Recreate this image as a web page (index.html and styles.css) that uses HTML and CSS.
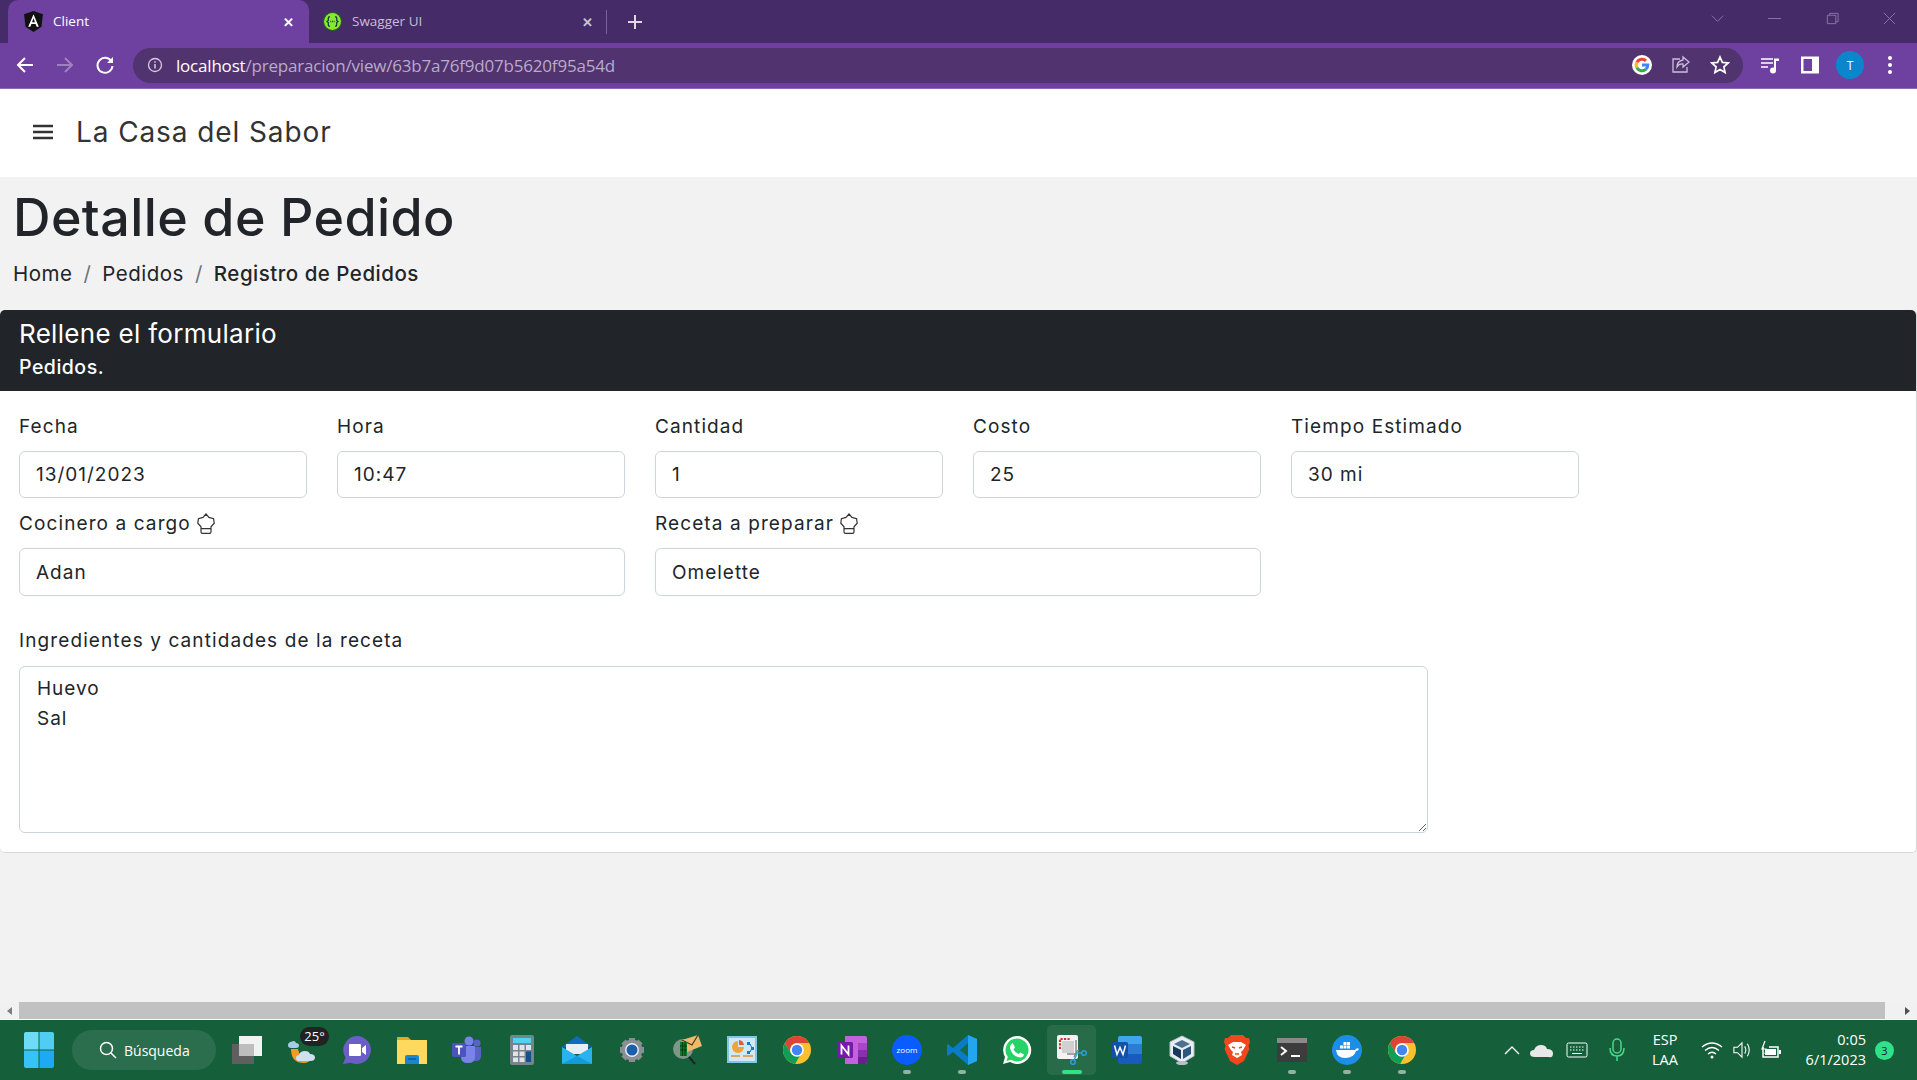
FILE: index.html
```html
<!DOCTYPE html>
<html lang="es">
<head>
    <meta charset="UTF-8">
    <meta name="viewport" content="width=device-width, initial-scale=1.0">
    <title>Client</title>
    <link rel="stylesheet" href="styles.css">
</head>
<body>
    <svg class="defs" width="0" height="0">
        <symbol id="chrome" viewBox="0 0 30 30">
            <circle cx="15" cy="15" r="14" fill="#fbc02d"/>
            <path d="M15 1a14 14 0 0 1 12.100 7H15a7 7 0 0 0-6.600 9.300L2.900 8A14 14 0 0 1 15 1z" fill="#db4437"/>
            <path d="M2.900 8a14 14 0 0 0 10.200 20.900l5.900-10.200a7 7 0 0 1-10.600-1.400z" fill="#0f9d58"/>
            <circle cx="15" cy="15" r="6.800" fill="#fff"/>
            <circle cx="15" cy="15" r="5.200" fill="#4285f4"/>
        </symbol>
        <symbol id="hat" viewBox="0 0 18 22">
            <path d="M9 1l3 3.400 4.600 1.400.6 4.400-3.200 3.600v5.200q0 1.400-1.400 1.400H5.400q-1.400 0-1.400-1.400v-5.200L.8 10.200l.6-4.400L6 4.400z M4 15.600h10" fill="none" stroke="#333" stroke-width="1.200"/>
        </symbol>
    </svg>

    <!-- barra del navegador -->
    <div class="tabstrip">
        <div class="tab tab-active">
            <svg class="favicon" viewBox="0 0 18 20"><path d="M9 0l9 3.200-1.400 11.900L9 20l-7.600-4.900L0 3.200z" fill="#111"/><path d="M9 3L4 15h2l1-2.600h4l1 2.600h2zM9 7l1.400 3.600H7.600z" fill="#fff"/></svg>
            <span class="tab-title">Client</span>
            <span class="tab-close">✕</span>
        </div>
        <div class="tab">
            <svg class="favicon" viewBox="0 0 18 18"><circle cx="9" cy="9" r="8.500" fill="#85ea2d" stroke="#2d5c1a"/><path d="M6.500 4.500q-1.500 0-1.500 1.500v2L3.800 9 5 10v2q0 1.500 1.500 1.500M11.500 4.500q1.500 0 1.500 1.500v2L14.200 9 13 10v2q0 1.500-1.500 1.500" fill="none" stroke="#173647" stroke-width="1.200"/><path d="M7 9h.8M8.600 9h.8M10.200 9h.8" stroke="#173647" stroke-width="1.200"/></svg>
            <span class="tab-title tab-title-dim">Swagger UI</span>
            <span class="tab-close tab-close-dim">✕</span>
        </div>
        <span class="tab-sep"></span>
        <svg class="new-tab" viewBox="0 0 16 16"><path d="M8 1v14M1 8h14" stroke="#e0d8ea" stroke-width="2"/></svg>
        <div class="window-btns">
            <svg viewBox="0 0 16 16"><path d="M2 5l6 6 6-6" fill="none" stroke="#8c78a8"/></svg>
            <svg viewBox="0 0 16 16"><path d="M1 8h14" stroke="#8c78a8"/></svg>
            <svg viewBox="0 0 16 16"><path d="M2.500 4.500h9v9h-9zM5 4.500V2.500h9v9h-2.500" fill="none" stroke="#8c78a8"/></svg>
            <svg viewBox="0 0 16 16"><path d="M2 2l12 12M14 2L2 14" stroke="#8c78a8"/></svg>
        </div>
    </div>

    <div class="toolbar">
        <div class="nav-btns">
            <svg viewBox="0 0 20 20"><path d="M18 10H3M10 3l-7 7 7 7" fill="none" stroke="#fff" stroke-width="2"/></svg>
            <svg viewBox="0 0 20 20"><path d="M2 10h15M10 3l7 7-7 7" fill="none" stroke="#9d82bd" stroke-width="2"/></svg>
            <svg viewBox="0 0 20 20"><path d="M16.500 6.500A7.500 7.500 0 1 0 17.500 11" fill="none" stroke="#fff" stroke-width="2"/><path d="M18 2v6h-6z" fill="#fff"/></svg>
        </div>
        <div class="omnibox">
            <svg class="info" viewBox="0 0 16 16"><circle cx="8" cy="8" r="6.500" fill="none" stroke="#d6cce2" stroke-width="1.300"/><path d="M8 7v4.500M8 4.300v1.500" stroke="#d6cce2" stroke-width="1.500"/></svg>
            <span class="url"><b>localhost</b>/preparacion/view/63b7a76f9d07b5620f95a54d</span>
            <svg class="omni-icon" viewBox="0 0 20 20"><circle cx="10" cy="10" r="10" fill="#fff"/><g fill="none" stroke-width="3"><path d="M4.900 7.200A5.800 5.800 0 0 1 14 5.800" stroke="#ea4335"/><path d="M4.900 7.200a5.800 5.800 0 0 0 0 5.600" stroke="#fbbc05"/><path d="M4.900 12.800A5.800 5.800 0 0 0 14 14.200" stroke="#34a853"/><path d="M14 14.200A5.800 5.800 0 0 0 15.800 10H10" stroke="#4285f4"/></g></svg>
            <svg class="omni-icon" viewBox="0 0 20 20"><path d="M9 4H2v13h14v-5" fill="none" stroke="#cbbedb" stroke-width="1.300"/><path d="M12 2l6 5-6 5V9q-4-.5-6 3 0-6 6-7z" fill="none" stroke="#cbbedb" stroke-width="1.300"/></svg>
            <svg class="omni-icon" viewBox="0 0 20 20"><path d="M10 2l2.400 5.400 5.800.6-4.300 3.900 1.200 5.700-5.100-3-5.100 3 1.200-5.700L1.800 8l5.800-.6z" fill="none" stroke="#fff" stroke-width="1.700"/></svg>
        </div>
        <div class="tool-icons">
            <svg viewBox="0 0 20 20"><path d="M1 4h12M1 8h12M1 12h7" stroke="#fff" stroke-width="1.600"/><path d="M14 14.500V3.500h5v2.500h-3v9" fill="#fff"/><circle cx="13" cy="15.500" r="3" fill="#fff"/></svg>
            <svg viewBox="0 0 20 20"><path d="M1 1.500h18v17H1z" fill="#fff"/><path d="M3.500 4h8.500v12H3.500z" fill="#6e409f"/></svg>
            <span class="avatar">T</span>
            <svg viewBox="0 0 20 20"><circle cx="10" cy="3" r="2" fill="#fff"/><circle cx="10" cy="10" r="2" fill="#fff"/><circle cx="10" cy="17" r="2" fill="#fff"/></svg>
        </div>
    </div>

    <!-- pagina -->
    <main class="page">
        <header class="navbar">
            <svg class="burger" viewBox="0 0 20 16"><path d="M0 2h20M0 8h20M0 14h20" stroke="#333" stroke-width="2.400"/></svg>
            <span class="brand">La Casa del Sabor</span>
        </header>
        <section class="page-title">
            <h1>Detalle de Pedido</h1>
            <ul class="breadcrumb">
                <li>Home</li>
                <li class="slash">/</li>
                <li>Pedidos</li>
                <li class="slash">/</li>
                <li class="current">Registro de Pedidos</li>
            </ul>
        </section>
        <section class="card">
            <div class="card-header">
                <h2>Rellene el formulario</h2>
                <p>Pedidos.</p>
            </div>
            <form class="card-body">
                <div class="form-row">
                    <div class="field">
                        <label>Fecha</label>
                        <input type="text" value="13/01/2023" readonly>
                    </div>
                    <div class="field">
                        <label>Hora</label>
                        <input type="text" value="10:47" readonly>
                    </div>
                    <div class="field">
                        <label>Cantidad</label>
                        <input type="text" value="1" readonly>
                    </div>
                    <div class="field">
                        <label>Costo</label>
                        <input type="text" value="25" readonly>
                    </div>
                    <div class="field">
                        <label>Tiempo Estimado</label>
                        <input type="text" value="30 mi" readonly>
                    </div>
                </div>
                <div class="form-row form-row-2">
                    <div class="field field-wide">
                        <label>Cocinero a cargo <svg class="hat"><use href="#hat"/></svg></label>
                        <input type="text" value="Adan" readonly>
                    </div>
                    <div class="field field-wide">
                        <label>Receta a preparar <svg class="hat"><use href="#hat"/></svg></label>
                        <input type="text" value="Omelette" readonly>
                    </div>
                </div>
                <div class="field field-area">
                    <label>Ingredientes y cantidades de la receta</label>
                    <textarea readonly>Huevo
Sal</textarea>
                </div>
            </form>
        </section>
    </main>

    <div class="hscroll">
        <span class="hscroll-btn"><i class="arrow-left"></i></span>
        <span class="hscroll-thumb"></span>
        <span class="hscroll-btn"><i class="arrow-right"></i></span>
    </div>

    <!-- barra de tareas -->
    <footer class="taskbar">
        <svg class="start" viewBox="0 0 30 36"><path d="M0 2q0-2 2-2h12.500v17.500H0z" fill="#6fdcf5"/><path d="M15.500 0H28q2 0 2 2v15.500H15.500z" fill="#4fcdf3"/><path d="M0 18.500h14.500V36H2q-2 0-2-2z" fill="#38c3f8"/><path d="M15.500 18.500H30V34q0 2-2 2H15.500z" fill="#1ea9f5"/></svg>
        <div class="search">
            <svg viewBox="0 0 18 18"><circle cx="7.500" cy="7.500" r="6" fill="none" stroke="#fff" stroke-width="1.500"/><path d="M12 12l5 5" stroke="#fff" stroke-width="1.500"/></svg>
            <span>Búsqueda</span>
        </div>
        <div class="apps">
            <div class="app"><svg viewBox="0 0 30 30"><rect x="0" y="9" width="22" height="20" fill="#5f5f5f"/><rect x="7" y="1" width="23" height="20" fill="#f2f2f2"/><rect x="7" y="9" width="15" height="12" fill="#bdbdbd"/></svg></div>
            <div class="app">
                <svg viewBox="0 0 30 30"><path d="M4 14q0 14 13 14 5 0 7-4-11 1-13-10z" fill="#f09a2c"/><path d="M9 13q3 0 3-2.500T9 8Q8 5 5 6.500 1 7 1 10t3 3z" fill="#a8cbe8"/><path d="M12 26q-3 0-3-3t3-3q1-4 6-4 4 0 5 3 5 0 5 3.500T23 26z" fill="#cfe0ef"/></svg>
                <span class="temp">25°</span>
            </div>
            <div class="app"><svg viewBox="0 0 30 30"><path d="M15 1a14 14 0 1 1-6 26.700L1 29l2.500-6.500A14 14 0 0 1 15 1z" fill="#6b5fc7"/><path d="M8 9h10q1 0 1 1v10q0 1-1 1H8q-1 0-1-1V10q0-1 1-1zM20 13l4-3v10l-4-3z" fill="#fff"/></svg></div>
            <div class="app"><svg viewBox="0 0 30 30"><path d="M0 5h30v24H0z" fill="#ffd95e"/><path d="M0 2h11l3 3H0z" fill="#e3a820"/><path d="M8 29v-7q0-2 2-2h10q2 0 2 2v7z" fill="#1a86d0"/><path d="M11 24h8" stroke="#0b5a9a" stroke-width="1.500"/></svg></div>
            <div class="app"><svg viewBox="0 0 30 30"><circle cx="25" cy="8" r="3.500" fill="#5a62c4"/><circle cx="17" cy="6" r="4.500" fill="#7b83eb"/><path d="M20 12h9v9q0 5-5 5t-4-5z" fill="#5a62c4"/><path d="M9 11h14v11q0 6-7 6t-7-6z" fill="#7b83eb"/><rect x="0" y="8" width="14" height="14" rx="1.500" fill="#4b53bc"/><path d="M3.500 11.500h7M7 11.500v8" stroke="#fff" stroke-width="1.800"/></svg></div>
            <div class="app"><svg viewBox="0 0 24 30"><rect x="0" y="0" width="24" height="30" rx="2" fill="#77848e"/><rect x="3" y="3" width="18" height="5" fill="#4fd3ee"/><path d="M3 10h5v5H3zM9.500 10h5v5h-5zM16 10h5v5h-5zM3 16.500h5v4.500H3zM9.500 16.500h5v4.500h-5zM3 22.500h5V27H3zM9.500 22.500h5V27h-5z" fill="#dfe4e8"/><rect x="16" y="16.500" width="5" height="10.500" fill="#14508f"/></svg></div>
            <div class="app"><svg viewBox="0 0 30 30"><path d="M15 1L0 12h30z" fill="#0f6cbd"/><path d="M4 9h22v10H4z" fill="#e8eef5"/><path d="M0 12v17h30V12L15 21z" fill="#29b2ee"/><path d="M0 29l15-8 15 8z" fill="#139ad8"/></svg></div>
            <div class="app"><svg viewBox="0 0 30 30"><path d="M15 3v24M3 15h24M6.500 6.500l17 17M23.500 6.500l-17 17" stroke="#8a8f94" stroke-width="6"/><circle cx="15" cy="15" r="10.500" fill="#8a8f94"/><circle cx="15" cy="15" r="7" fill="#e8eef5"/><circle cx="15" cy="15" r="5.500" fill="#1c5ea8"/></svg></div>
            <div class="app"><svg viewBox="0 0 30 30"><circle cx="11" cy="14" r="10" fill="#7f968a"/><path d="M17 22l6 7" stroke="#222" stroke-width="2"/><path d="M10 5l16-5 4 11-15 6z" fill="#eeb96a"/><path d="M10 5l10 5 6-10" fill="none" stroke="#4b3a1e" stroke-width="1.200"/><path d="M8 7h7v14H8z" fill="#0f7a2c"/><path d="M8 11h7M8 15h7M10.500 7v14M13 7v14" stroke="#0b2f14" stroke-width=".8"/></svg></div>
            <div class="app"><svg viewBox="0 0 30 30"><rect x="0" y="1" width="30" height="27" fill="#7fc6e8"/><rect x="2" y="3" width="26" height="23" fill="#cfeaf6"/><path d="M11 6a6 6 0 1 0 6 6h-6z" fill="#f0a43c"/><path d="M12 5a6 6 0 0 1 5 5h-5z" fill="#e2622a"/><path d="M20 7h3v3h-3zM24 12h3v3h-3zM20 16h3v3h-3z" fill="#1b79bd"/><path d="M4 21h9M16 21h10" stroke="#e88f2f" stroke-width="1.500"/><path d="M23 9l2 4-2 4" fill="none" stroke="#1b79bd"/></svg></div>
            <div class="app"><svg><use href="#chrome"/></svg></div>
            <div class="app"><svg viewBox="0 0 30 30"><path d="M8 1h20q2 0 2 2v24q0 2-2 2H8z" fill="#c263dd"/><path d="M21 8h9v7h-9z" fill="#a945c7"/><path d="M21 15h9v7h-9z" fill="#8a2fb0"/><path d="M21 22h9v5q0 2-2 2h-7z" fill="#6a1f90"/><rect x="0" y="7" width="16" height="16" rx="1.500" fill="#7719aa"/><path d="M4.500 19.500v-9l7 9v-9" fill="none" stroke="#fff" stroke-width="1.800"/></svg></div>
            <div class="app">
                <svg viewBox="0 0 30 30"><circle cx="15" cy="15" r="15" fill="#0b5cff"/><text class="zoom-text" x="15" y="18">zoom</text></svg>
                <i class="dot"></i>
            </div>
            <div class="app">
                <svg viewBox="0 0 30 30"><path d="M21 0l9 4v22l-9 4L6 17l-5 4-1-1v-10l1-1 5 4z" fill="#0a7cc7"/><path d="M21 0l9 4v22l-9 4z" fill="#23a5ef"/><path d="M21 8l-8 7 8 7z" fill="#136a44"/></svg>
                <i class="dot"></i>
            </div>
            <div class="app"><svg viewBox="0 0 30 30"><path d="M15 1a14 14 0 1 1-7 26L1 29l2-7A14 14 0 0 1 15 1z" fill="#fff"/><path d="M15 3.500a11.500 11.500 0 1 1-6 21.300l-4.500 1.300 1.300-4.300A11.500 11.500 0 0 1 15 3.500z" fill="#25d366"/><path d="M11 8.500l2 4-1.500 2q2 3.500 5 4.500l2-1.500 3.500 2q-.5 3-4 3-8-1-10-9.500 0-4 3-5z" fill="#fff"/></svg></div>
            <div class="app app-active">
                <svg viewBox="0 0 30 30"><rect x="0" y="0" width="21" height="24" rx="2" fill="#f3f3f3"/><path d="M3 14V4h11" fill="none" stroke="#c8392b" stroke-width="2.200" stroke-dasharray="2.200 1.300"/><path d="M5 6h12v12H5z" fill="#d0d0d0"/><path d="M19 5v14l-9 0" fill="none" stroke="#8b8b8b" stroke-width="1.500"/><path d="M17 22l3-6 2-1" fill="none" stroke="#888" stroke-width="1.500"/><circle cx="16" cy="27" r="2.300" fill="none" stroke="#2a9fd6" stroke-width="1.600"/><circle cx="27" cy="18" r="2.300" fill="none" stroke="#2a9fd6" stroke-width="1.600"/><path d="M17 25l3-6M25 18h-6" stroke="#2a9fd6" stroke-width="1.400"/></svg>
                <i class="dot dot-active"></i>
            </div>
            <div class="app"><svg viewBox="0 0 30 30"><path d="M8 1h20q2 0 2 2v6H6V3q0-2 2-2z" fill="#41a5ee"/><path d="M6 9h24v10H6z" fill="#2b7cd3"/><path d="M6 19h24v7q0 3-2 3H8q-2 0-2-3z" fill="#185abd"/><rect x="0" y="7" width="16" height="16" rx="1.500" fill="#1450a8"/><path d="M2.500 10.500l2.500 9 3-7 3 7 2.500-9" fill="none" stroke="#fff" stroke-width="1.500"/></svg></div>
            <div class="app"><svg viewBox="0 0 26 30"><path d="M13 1l12 6v14l-12 7-12-7V7z" fill="#e8eef2" stroke="#b8c0c8"/><path d="M13 5l8 4-8 4-8-4z" fill="#4c6f92"/><path d="M4 11l8 4v9l-8-5z" fill="#173a5c"/><path d="M22 11l-8 4v9l8-5z" fill="#2a5680"/><ellipse cx="13" cy="28" rx="6" ry="2" fill="#b8c0c8"/></svg></div>
            <div class="app"><svg viewBox="0 0 26 30"><path d="M7 0h12l3 3 3 0 1 4-1.500 4 1 3L20 26l-7 4-7-4L.5 14l1-3L0 7l1-4 3 0z" fill="#f1471d"/><path d="M4 10l5-3h8l5 3-3 5-2 2 1 3-5 3-5-3 1-3-2-2z" fill="#fff"/><path d="M8 12l3 1M18 12l-3 1M11 19h4" stroke="#f1471d" stroke-width="1.500"/></svg></div>
            <div class="app">
                <svg viewBox="0 0 30 24"><rect x="0" y="0" width="30" height="24" rx="2" fill="#3c3c3c"/><rect x="0" y="0" width="30" height="5" fill="#8a8a8a"/><path d="M4 9l5 4-5 4" fill="none" stroke="#fff" stroke-width="2"/><path d="M14 18h9" stroke="#fff" stroke-width="2"/></svg>
                <i class="dot"></i>
            </div>
            <div class="app">
                <svg viewBox="0 0 30 30"><circle cx="15" cy="15" r="15" fill="#1d8ee8"/><path d="M4 15h19q2-3 4-1-1 2-3 2-2 7-11 7-8 0-9-8z" fill="#fff"/><path d="M8 10.500h3v3H8zM11.500 10.500h3v3h-3zM15 10.500h3v3h-3zM11.500 7h3v3h-3zM15 7h3v3h-3z" fill="#fff"/></svg>
                <i class="dot"></i>
            </div>
            <div class="app">
                <svg><use href="#chrome"/></svg>
                <i class="dot"></i>
            </div>
        </div>
        <div class="tray">
            <svg class="tray-slot" viewBox="0 0 30 16"><path d="M8 12l7-7 7 7" fill="none" stroke="#fff" stroke-width="1.300"/></svg>
            <svg class="tray-slot" viewBox="0 0 30 16"><path d="M8 15q-5 0-5-3.500T7 8q2-5 7-5t6 4q6 0 6 4.500T22 15z" fill="#e8e8e8"/></svg>
            <svg class="tray-kb" viewBox="0 0 40 16"><rect x="10" y="1" width="20" height="14" rx="1.500" fill="none" stroke="#fff"/><path d="M13 5h1.500M16 5h1.500M19 5h1.500M22 5h1.500M25 5h1.500M13 8h1.500M16 8h1.500M19 8h1.500M22 8h1.500M25 8h1.500M15 11.500h10" stroke="#fff"/></svg>
            <svg class="tray-kb" viewBox="0 0 40 24"><rect x="16" y="1" width="8" height="14" rx="4" fill="none" stroke="#46d98c" stroke-width="1.500"/><path d="M13 10q0 8 7 8t7-8M20 18v5" fill="none" stroke="#46d98c" stroke-width="1.500"/></svg>
            <div class="lang">ESP<br>LAA</div>
            <svg class="tray-wifi" viewBox="0 0 22 18"><path d="M1 6q10-8 20 0M4 9.500q7-6 14 0M7 13q4-3.500 8 0" fill="none" stroke="#fff" stroke-width="1.300"/><circle cx="11" cy="16" r="1.500" fill="#fff"/></svg>
            <svg class="tray-slot" viewBox="0 0 30 20"><path d="M6 7h4l5-5v16l-5-5H6z" fill="none" stroke="#fff" stroke-width="1.200"/><path d="M18 6q2.500 4 0 8M21 3q4 7 0 14" fill="none" stroke="#fff" stroke-width="1.200"/></svg>
            <svg class="tray-batt" viewBox="-2 0 32 20"><path d="M4 7v10h15V7H10" fill="none" stroke="#fff" stroke-width="1.500"/><path d="M6 9h11v6H6z" fill="#fff"/><path d="M20 10h2v4h-2z" fill="#fff"/><path d="M6 1L3 9h4l-1 5" fill="none" stroke="#fff" stroke-width="1.200"/></svg>
            <div class="clock">0:05<br>6/1/2023</div>
            <span class="badge">3</span>
        </div>
    </footer>
</body>
</html>
```

FILE: styles.css
```css
* {
    box-sizing: border-box;
}

html, body {
    height: 100%;
}

body {
    margin: 0;
    display: flex;
    flex-direction: column;
    height: 100vh;
    overflow: hidden;
    font-family: "Open Sans", sans-serif;
    background-color: #f2f2f2;
    color: #212529;
}

.defs {
    position: absolute;
}

/* navegador */
.tabstrip {
    height: 43px;
    flex: none;
    display: flex;
    align-items: center;
    background-color: #452b68;
    color: #fff;
}

.tab {
    width: 300px;
    height: 43px;
    display: flex;
    align-items: center;
    padding: 0 14px 0 16px;
    font-size: 13.5px;
}

.tab-active {
    margin-left: 8px;
    width: 301px;
    padding-right: 15px;
    background-color: #6e409f;
    border-radius: 10px 10px 0 0;
}

.tab:not(.tab-active) {
    width: 297px;
    padding: 0 13px 0 14px;
}

.favicon {
    width: 19px;
    height: 21px;
    flex: none;
}

.tab-title {
    margin-left: 10px;
    padding-bottom: 2px;
    flex: 1;
}

.tab-title-dim {
    color: #c9bdd9;
}

.tab-close {
    font-size: 13px;
    font-weight: bold;
}

.tab-close-dim {
    color: #cbc2d8;
}

.tab-sep {
    width: 1px;
    height: 24px;
    background-color: #7a6496;
}

.new-tab {
    width: 16px;
    height: 16px;
    margin-left: 20px;
}

.window-btns {
    margin-left: auto;
    display: flex;
    align-items: center;
    gap: 42.5px;
    padding-right: 20px;
    margin-top: -6px;
}

.window-btns svg {
    width: 15px;
    height: 15px;
}

.toolbar {
    height: 46px;
    flex: none;
    display: flex;
    align-items: center;
    padding-bottom: 1px;
    background-color: #6e409f;
    border-bottom: 1px solid #8f69b8;
}

.nav-btns {
    display: flex;
    gap: 20px;
    padding-left: 15px;
    width: 133px;
}

.nav-btns svg {
    width: 20px;
    height: 20px;
}

.omnibox {
    width: 1610px;
    height: 35px;
    display: flex;
    align-items: center;
    padding: 0 13px 0 14px;
    background-color: #51336f;
    border-radius: 18px;
}

.info {
    width: 16px;
    height: 16px;
}

.url {
    margin-left: 13px;
    flex: 1;
    font-size: 17px;
    letter-spacing: -.2px;
    color: #b9abca;
    white-space: nowrap;
}

.url b {
    font-weight: normal;
    color: #fff;
}

.omni-icon {
    width: 20px;
    height: 20px;
    margin-right: 19px;
}

.omni-icon:last-child {
    margin-right: 0;
}

.tool-icons {
    flex: 1;
    display: flex;
    align-items: center;
    gap: 20px;
    padding-left: 17px;
}

.tool-icons svg {
    width: 20px;
    height: 20px;
}

.avatar {
    width: 28px;
    height: 28px;
    border-radius: 50%;
    background-color: #0b85cc;
    color: #fff;
    font-size: 12px;
    display: flex;
    align-items: center;
    justify-content: center;
    margin: 0 -4px;
}

/* pagina */
.page {
    flex: 1;
    min-height: 0;
    font-family: Inter, "Liberation Sans", sans-serif;
}

.navbar {
    height: 88px;
    display: flex;
    align-items: center;
    padding: 0 0 2px 33px;
    background-color: #fff;
}

.burger {
    width: 20px;
    height: 16px;
}

.brand {
    margin-left: 23px;
    font-size: 28px;
    letter-spacing: .9px;
    color: #333;
}

.page-title {
    height: 133px;
    padding: 9px 14px 0 13px;
}

h1 {
    margin: 0;
    font-size: 52px;
    font-weight: 500;
    line-height: 64px;
    letter-spacing: .4px;
    color: #212529;
}

.breadcrumb {
    list-style: none;
    margin: 10px 0 0;
    padding: 0;
    display: flex;
    gap: 11px;
    font-size: 20.5px;
    line-height: 28px;
    letter-spacing: .5px;
}

.slash {
    color: #6c757d;
}

.current {
    font-weight: 500;
}

.card {
    height: 543px;
    background-color: #fff;
    border-right: 1px solid #d8d8d8;
    border-bottom: 1px solid #d8d8d8;
    border-radius: 5px;
}

.card-header {
    height: 81px;
    padding: 9px 19px 0;
    background-color: #212529;
    color: #fff;
    border-radius: 5px 5px 0 0;
}

.card-header h2 {
    margin: 0;
    font-size: 26px;
    font-weight: 400;
    line-height: 30px;
    letter-spacing: .3px;
}

.card-header p {
    margin: 6px 0 0;
    font-size: 19.5px;
    font-weight: 500;
    line-height: 24px;
    letter-spacing: .5px;
}

.card-body {
    padding: 24px 19px 0;
}

.form-row {
    display: grid;
    grid-template-columns: repeat(6, 288px);
    column-gap: 30px;
}

.form-row-2 {
    margin-top: 14px;
}

.field-wide {
    grid-column: span 2;
}

label {
    display: block;
    font-size: 19px;
    line-height: 24px;
    height: 24px;
    letter-spacing: 1.1px;
    color: #212529;
}

.hat {
    width: 18px;
    height: 22px;
    vertical-align: -5px;
}

input, textarea {
    display: block;
    width: 100%;
    margin-top: 12px;
    border: 1px solid #ced4da;
    border-radius: 6px;
    background-color: #fff;
    color: #212529;
    font-family: inherit;
    font-size: 19px;
    letter-spacing: 1px;
    padding: 0 16px;
    outline: none;
}

input {
    height: 47px;
}

.field-wide input {
    height: 48px;
}

.field-area {
    margin-top: 33px;
}

textarea {
    width: 1409px;
    height: 167px;
    margin-top: 13px;
    padding: 7px 17px;
    line-height: 30px;
    resize: both;
}

/* scroll horizontal */
.hscroll {
    height: 18px;
    flex: none;
    display: flex;
    background-color: #f1f1f1;
    border-bottom: 1px solid #fff;
}

.hscroll-btn {
    width: 19px;
    display: flex;
    align-items: center;
    justify-content: center;
}

.hscroll-thumb {
    flex: 1;
    margin-right: 13px;
    background-color: #c1c1c1;
}

.arrow-left {
    border: 4px solid transparent;
    border-right: 5px solid #7d7d7d;
    border-left: 0;
}

.arrow-right {
    border: 4px solid transparent;
    border-left: 5px solid #505050;
    border-right: 0;
}

/* barra de tareas */
.taskbar {
    height: 60px;
    flex: none;
    display: flex;
    align-items: center;
    padding-left: 24px;
    background-color: #155f3a;
    color: #fff;
    font-family: "Open Sans", sans-serif;
}

.start {
    width: 30px;
    height: 36px;
    flex: none;
}

.search {
    width: 144px;
    height: 40px;
    margin-left: 18px;
    display: flex;
    align-items: center;
    padding-left: 27px;
    gap: 7px;
    border-radius: 20px;
    background-color: #2a6e4d;
    font-size: 14px;
}

.search svg {
    width: 18px;
    height: 18px;
}

.apps {
    display: flex;
    margin-left: 3px;
}

.app {
    position: relative;
    width: 55px;
    height: 60px;
    display: flex;
    align-items: center;
    justify-content: center;
}

.app svg {
    width: 30px;
    height: 30px;
}

.app-active::before {
    content: "";
    position: absolute;
    left: 3px;
    right: 3px;
    top: 5px;
    bottom: 5px;
    border-radius: 5px;
    background-color: rgba(255, 255, 255, .08);
}

.app-active svg {
    position: relative;
}

.temp {
    position: absolute;
    top: 7px;
    left: 26px;
    width: 29px;
    height: 19px;
    border-radius: 10px;
    background-color: #222;
    font-size: 13px;
    line-height: 19px;
    text-align: center;
}

.zoom-text {
    font-size: 8px;
    fill: #fff;
    text-anchor: middle;
}

.dot {
    position: absolute;
    left: 50%;
    bottom: 6px;
    width: 8px;
    height: 4px;
    margin-left: -4px;
    border-radius: 2px;
    background-color: #8fb3a3;
}

.dot-active {
    width: 20px;
    margin-left: -10px;
    background-color: #2fe28a;
}

.tray {
    margin-left: auto;
    display: flex;
    align-items: center;
    padding-right: 23px;
}

.tray-slot {
    width: 30px;
    height: 18px;
}

.tray-kb {
    width: 40px;
    height: 24px;
}

.tray-wifi {
    width: 22px;
    height: 18px;
    margin: 0 4px 0 8px;
}

.tray-batt {
    width: 32px;
    height: 20px;
}

.lang {
    width: 56px;
    text-align: center;
    font-size: 14.5px;
    line-height: 20px;
}

.clock {
    width: 77px;
    text-align: right;
    font-size: 14.5px;
    line-height: 20px;
}

.badge {
    width: 19px;
    height: 19px;
    margin-left: 9px;
    border-radius: 50%;
    background-color: #2fe28a;
    color: #123;
    font-size: 11px;
    line-height: 19px;
    text-align: center;
}
```
